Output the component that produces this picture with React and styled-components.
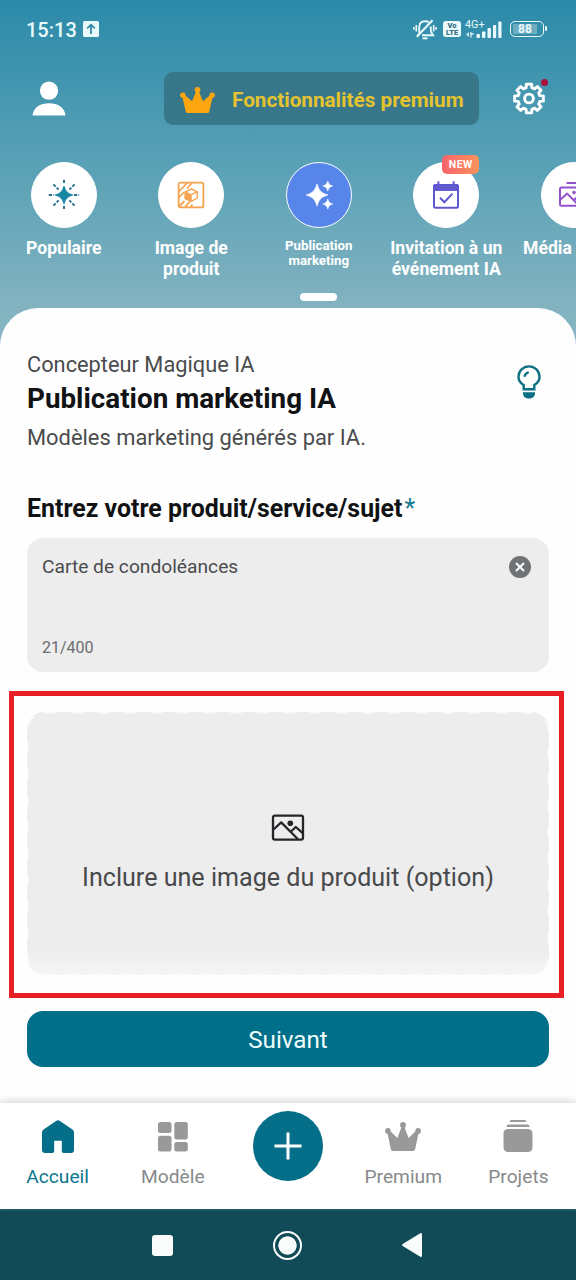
import styled, { createGlobalStyle } from "styled-components";

const categories = [
  { label: ["Populaire"], icon: "spark" },
  { label: ["Image de", "produit"], icon: "product" },
  { label: ["Publication", "marketing"], icon: "stars", active: true },
  { label: ["Invitation à un", "événement IA"], icon: "calendar", isNew: true },
  { label: ["Média"], icon: "media", cut: true },
];

const App = () => {
  return (
    <>
      <GlobalStyle />
      <Screen>
        <StatusBar>
          <Clock>15:13</Clock>
          <UploadIcon />
          <StatusIcons>
            <MutedIcon />
            <VolteIcon />
            <Signal>
              <Network>4G+</Network>
              <SignalIcon />
            </Signal>
            <Battery>
              <BatteryLevel>88</BatteryLevel>
            </Battery>
          </StatusIcons>
        </StatusBar>

        <TopBar>
          <UserIcon />
          <PremiumButton>
            <CrownIcon width={35} height={26} color="#fda610" />
            Fonctionnalités premium
          </PremiumButton>
          <Settings>
            <GearIcon />
            <RedDot />
          </Settings>
        </TopBar>

        <Categories>
          {categories.map((item) => (
            <Category key={item.icon}>
              <Circle $active={item.active}>
                <CategoryIcon name={item.icon} />
                {item.isNew && <NewBadge>NEW</NewBadge>}
              </Circle>
              <CategoryLabel $active={item.active} $cut={item.cut}>
                {item.label.map((line) => (
                  <span key={line}>{line}</span>
                ))}
              </CategoryLabel>
              {item.active && <Indicator />}
            </Category>
          ))}
        </Categories>

        <Sheet>
          <Heading>
            <div>
              <Overline>Concepteur Magique IA</Overline>
              <Title>Publication marketing IA</Title>
              <Description>Modèles marketing générés par IA.</Description>
            </div>
            <BulbIcon />
          </Heading>

          <Question>
            Entrez votre produit/service/sujet<Star>*</Star>
          </Question>
          <InputBox>
            <InputRow>
              Carte de condoléances
              <ClearIcon />
            </InputRow>
            <Counter>21/400</Counter>
          </InputBox>

          <Upload>
            <DashedFrame>
              <rect x="0.75" y="0.75" width="520.5" height="261.5" rx="17" />
            </DashedFrame>
            <PictureIcon />
            <span>Inclure une image du produit (option)</span>
            <Highlight />
          </Upload>

          <NextButton>Suivant</NextButton>
        </Sheet>

        <TabBar>
          <Tab $active>
            <HomeIcon />
            Accueil
          </Tab>
          <Tab>
            <GridIcon />
            Modèle
          </Tab>
          <AddTab>
            <AddButton>
              <svg width="28" height="28" viewBox="0 0 28 28" fill="none" stroke="#fff" strokeWidth="3">
                <path d="M14 0.5V27.5M0.5 14H27.5" />
              </svg>
            </AddButton>
          </AddTab>
          <Tab>
            <TabIcon>
              <CrownIcon width={36} height={29} color="#999" />
            </TabIcon>
            Premium
          </Tab>
          <Tab>
            <StackIcon />
            Projets
          </Tab>
        </TabBar>

        <SystemBar>
          <Recents />
          <HomeKey />
          <svg width="20" height="24" viewBox="0 0 20 24" fill="#fafcfc">
            <path d="M18.3 0.3Q20 -0.5 20 1.5V22.5Q20 24.5 18.3 23.7L0.7 13Q-0.5 12 0.7 11Z" />
          </svg>
        </SystemBar>
      </Screen>
    </>
  );
};

/* icons */

const UploadIcon = () => (
  <svg width="16" height="16" viewBox="0 0 16 16">
    <rect width="16" height="16" rx="1.5" fill="#e9fafc" />
    <path d="M8 13V4M4.2 7.4L8 3.7L11.8 7.4" fill="none" stroke="#3589a3" strokeWidth="1.8" />
  </svg>
);

const MutedIcon = () => (
  <svg width="24" height="21" viewBox="0 0 24 21" fill="none" stroke="#eafafd" strokeWidth="1.9">
    <path d="M6.2 14V8.5Q6.2 2.2 12 2.2Q14.4 2.2 15.8 3.2M17.8 7.5V12.5L20.2 16.2H9M4 16.2H5.5" />
    <path d="M3.8 17.8L19.5 1.2" strokeWidth="2.1" />
    <path d="M9.5 19.3H14.5" strokeWidth="2" />
    <path d="M3.3 6V12.5M0.9 8V10.8M20.7 6V12.5M23.1 8V10.8" strokeWidth="1.6" />
  </svg>
);

const VolteIcon = () => (
  <VolteBox>
    <span>Vo</span>
    <span>LTE</span>
  </VolteBox>
);

const SignalIcon = () => (
  <svg width="36" height="17" viewBox="0 0 36 17" fill="#eafafd">
    <path d="M0 13.5L3 11V16ZM4.2 11H5.6V16.5H4.2ZM5.4 11L8.5 13.3L5.4 14Z" opacity="0.85" />
    <rect x="10.5" y="13" width="3.4" height="4" rx="0.8" />
    <rect x="16" y="10.5" width="3.4" height="6.5" rx="0.8" />
    <rect x="21.5" y="7" width="3.4" height="10" rx="0.8" />
    <rect x="27" y="4" width="3.2" height="13" rx="0.8" />
    <rect x="32.3" y="0.5" width="3.2" height="16.5" rx="0.8" />
  </svg>
);

const UserIcon = () => (
  <svg width="34" height="35" viewBox="0 0 34 35" fill="#fff">
    <circle cx="17" cy="9.7" r="9.1" />
    <path d="M0.5 34.6C1 26.8 8 22.2 17 22.2S33 26.8 33.5 34.6Z" />
  </svg>
);

const CrownIcon = ({ width, height, color }) => (
  <svg width={width} height={height} viewBox="0 0 36 28" preserveAspectRatio="none" fill={color}>
    <circle cx="18" cy="2.9" r="2.9" />
    <circle cx="2.9" cy="8.7" r="2.8" />
    <circle cx="33.1" cy="8.7" r="2.8" />
    <path d="M2.2 9.5L4.6 8.3L12.4 15.4L16.6 4.5H19.4L23.6 15.4L31.4 8.3L33.8 9.5L30.2 26Q29.9 28 28 28H8Q6.1 28 5.8 26Z" />
  </svg>
);

// eight flat teeth, four points per tooth
const gearPoints = Array.from({ length: 8 }, (_, i) =>
  [
    [-15, 11.2],
    [-10.5, 14.6],
    [10.5, 14.6],
    [15, 11.2],
  ].map(([offset, radius]) => {
    const angle = ((i * 45 + offset - 90) * Math.PI) / 180;
    return `${(17 + radius * Math.cos(angle)).toFixed(2)},${(16.5 + radius * Math.sin(angle)).toFixed(2)}`;
  })
)
  .flat()
  .join(" ");

const GearIcon = () => (
  <svg width="34" height="33" viewBox="0 0 34 33" fill="none" stroke="#fff" strokeWidth="2.9" strokeLinejoin="round">
    <polygon points={gearPoints} />
    <circle cx="17" cy="16.5" r="4.4" />
  </svg>
);

const BulbIcon = () => (
  <svg width="24" height="34" viewBox="0 0 24 34">
    <path
      d="M6.7 24.2V20.1C3.6 18.3 1.5 15.6 1.5 11.8A10.5 10.4 0 0 1 22.5 11.8C22.5 15.6 20.4 18.3 17.3 20.1V24.2Z"
      fill="none"
      stroke="#0d7084"
      strokeWidth="2.4"
    />
    <path d="M7.6 10.8Q8.4 8.4 10.8 7.6" fill="none" stroke="#0d7084" strokeWidth="2.4" strokeLinecap="round" />
    <path d="M6 27.2H18V28.4C18 31.5 15.3 33.5 12 33.5S6 31.5 6 28.4Z" fill="#0d7084" />
  </svg>
);

const ClearIcon = () => (
  <svg width="22" height="22" viewBox="0 0 22 22">
    <circle cx="11" cy="11" r="11" fill="#707375" />
    <path d="M7 7L15 15M15 7L7 15" stroke="#fff" strokeWidth="2" />
  </svg>
);

const PictureIcon = () => (
  <svg width="34" height="27" viewBox="0 0 34 27" fill="none" stroke="#242629" strokeWidth="2.3" strokeLinejoin="round">
    <rect x="2" y="1.6" width="30" height="24" rx="1.8" />
    <path d="M2.5 15.5L10.2 8.4L27 25.2M19.5 18L24.8 13L32 19.3" />
    <circle cx="19.3" cy="9.2" r="2.8" fill="#242629" stroke="none" />
  </svg>
);

const HomeIcon = () => (
  <svg width="34" height="34" viewBox="0 0 34 34" fill="#056e88">
    <path d="M15 0.9Q17 -0.5 19 0.9L31.4 9.5Q33 10.6 33 12.5V30Q33 33 30 33H22.5Q20.8 33 20.8 31.3V20.7H13.2V31.3Q13.2 33 11.5 33H4Q1 33 1 30V12.5Q1 10.6 2.6 9.5Z" />
  </svg>
);

const GridIcon = () => (
  <svg width="30" height="34" viewBox="0 0 30 34" fill="#999">
    <rect y="2" width="13.5" height="11" rx="2.5" />
    <rect x="16.3" y="2" width="13.5" height="17.4" rx="2.5" />
    <rect y="15.7" width="13.5" height="15.8" rx="2.5" />
    <rect x="16.3" y="22" width="13.5" height="9.5" rx="2.5" />
  </svg>
);

const StackIcon = () => (
  <svg width="30" height="34" viewBox="0 0 30 34" fill="#999">
    <path d="M8 0H22Q23 0 23.4 2H6.6Q7 0 8 0ZM5 4.6H25Q26 4.6 26.6 7H3.4Q4 4.6 5 4.6Z" />
    <rect x="0.5" y="9" width="29" height="23" rx="4.5" />
  </svg>
);

const CategoryIcon = ({ name }) => {
  if (name === "spark") {
    return (
      <svg width="32" height="32" viewBox="0 0 32 32" stroke="#2a6f88" strokeWidth="1.9" fill="none">
        <path
          d="M16 7.2C17.6 12.4 19.6 14.4 24.8 16C19.6 17.6 17.6 19.6 16 24.8C14.4 19.6 12.4 17.6 7.2 16C12.4 14.4 14.4 12.4 16 7.2Z"
          fill="#1986a3"
          stroke="#1986a3"
          strokeWidth="1"
        />
        <path
          d="M16 0.8V5.2M16 26.8V31.2M0.8 16H6M26 16H31.2M5.4 5.4L10.6 10.6M26.6 26.6L21.4 21.4M26.6 5.4L21.4 10.6M5.4 26.6L10.6 21.4"
          strokeDasharray="3.2 1.4"
        />
      </svg>
    );
  }
  if (name === "product") {
    return (
      <svg width="28" height="28" viewBox="0 0 28 28" fill="none" stroke="#f6a350" strokeWidth="1.8" strokeLinejoin="round">
        <rect x="1.6" y="1.6" width="24.8" height="24.8" rx="2" />
        <path d="M1.5 11L10.5 1.5M1.5 17L7 11M10 7.5L15.5 1.5M2 25.5L7.5 20M8 26L12.5 20.8M13.5 26L15.5 23.5" />
        <path d="M8.2 10.8L14.6 8L20.3 10.8V17L14.2 20.4L8.2 17.5Z" strokeWidth="1.4" />
        <path d="M8.2 10.8L14.2 13.6V20.4L8.2 17.5Z" fill="#f6a350" strokeWidth="1" />
        <path d="M14.2 13.6L20.3 10.8" strokeWidth="1.3" />
      </svg>
    );
  }
  if (name === "stars") {
    return (
      <svg width="28" height="28" viewBox="0 0 28 28" fill="#fff" stroke="#fff" strokeWidth="0.6">
        <path d="M12 2.8C14.2 10 16 11.8 23 14C16 16.2 14.2 18 12 25.2C9.8 18 8 16.2 1 14C8 11.8 9.8 10 12 2.8Z" />
        <path d="M22.8 0C23.8 3.3 24.5 4 27.8 5C24.5 6 23.8 6.7 22.8 10C21.8 6.7 21.1 6 17.8 5C21.1 4 21.8 3.3 22.8 0Z" />
        <path d="M22.8 18C23.8 21.3 24.5 22 27.8 23C24.5 24 23.8 24.7 22.8 28C21.8 24.7 21.1 24 17.8 23C21.1 22 21.8 21.3 22.8 18Z" />
      </svg>
    );
  }
  if (name === "calendar") {
    return (
      <svg width="28" height="28" viewBox="0 0 28 28" fill="none" stroke="#6058cf" strokeWidth="2">
        <rect x="2" y="4" width="24" height="22.8" rx="1.5" />
        <path d="M2 3.8H26V9.4H2Z" fill="#6058cf" strokeWidth="1" />
        <path d="M6.4 0.3V4M21.6 0.3V4M8 16.8L12.4 21.2L20.4 12.6" />
      </svg>
    );
  }
  return (
    <svg width="32" height="28" viewBox="0 0 32 28" fill="none" stroke="#9351cb" strokeWidth="2" strokeLinejoin="round">
      <path d="M8.5 2H31" />
      <rect x="2" y="6.4" width="28" height="18.4" rx="1.5" />
      <path d="M2.5 18.5L9.2 12.6L21 24.5M15.5 19.2L19.5 15.8L28 22" />
      <circle cx="16" cy="11.6" r="1.8" fill="#9351cb" stroke="none" />
    </svg>
  );
};

/* styles */

const GlobalStyle = createGlobalStyle`
  * {
    box-sizing: border-box;
  }

  body {
    margin: 0;
    font-family: Roboto, "Liberation Sans", sans-serif;
  }

  svg {
    display: block;
    flex-shrink: 0;
  }
`;

const Screen = styled.div`
  width: 576px;
  height: 1280px;
  display: flex;
  flex-direction: column;
  overflow: hidden;
  background: linear-gradient(#2b8aa9 0, #559fb5 150px, #83b3c1 310px, #8ab6c3 350px);
`;

const StatusBar = styled.header`
  height: 58px;
  display: flex;
  align-items: center;
  gap: 6px;
  padding: 0 29px 0 26px;
  color: #e9fafc;
`;

const Clock = styled.div`
  font-size: 20px;
  font-weight: 500;
  line-height: 24px;
  padding-top: 1px;
`;

const StatusIcons = styled.div`
  display: flex;
  align-items: center;
  margin-left: auto;
`;

const VolteBox = styled.div`
  width: 18px;
  height: 16px;
  margin: 0 5px 0 6px;
  padding-top: 1px;
  border-radius: 3px;
  background: #eafafd;
  color: #35707f;
  display: flex;
  flex-direction: column;
  align-items: center;
  font-size: 7.5px;
  font-weight: 900;
  line-height: 7px;
`;

const Signal = styled.div`
  position: relative;
  width: 36px;
  height: 17px;
`;

const Network = styled.div`
  position: absolute;
  top: -2px;
  left: -1px;
  font-size: 10.8px;
  line-height: 11px;
`;

const Battery = styled.div`
  position: relative;
  width: 34px;
  height: 16px;
  margin: 0 3px 0 8px;
  padding: 2px;
  border: 1.5px solid #eafafd;
  border-radius: 5px;

  &::after {
    content: "";
    position: absolute;
    top: 4px;
    right: -4px;
    width: 2px;
    height: 5px;
    border-radius: 1px;
    background: #eafafd;
  }
`;

const BatteryLevel = styled.div`
  width: 24px;
  height: 10px;
  background: #6eadc1;
  font-size: 12px;
  font-weight: 700;
  line-height: 11px;
  text-align: center;
`;

const TopBar = styled.div`
  display: flex;
  align-items: center;
  margin-top: 14px;
  padding: 0 30px 0 32px;
`;

const PremiumButton = styled.button`
  width: 315px;
  height: 53px;
  margin: 0 33px 0 98px;
  padding: 2px 0 0 16px;
  display: flex;
  align-items: center;
  gap: 17px;
  border: none;
  border-radius: 9px;
  background: #387789;
  color: #e4c32f;
  font-family: inherit;
  font-size: 20.7px;
  font-weight: 700;
  white-space: nowrap;
`;

const Settings = styled.div`
  position: relative;
`;

const RedDot = styled.div`
  position: absolute;
  top: -3px;
  right: -2px;
  width: 7px;
  height: 7px;
  border-radius: 50%;
  background: #a9123f;
`;

const Categories = styled.div`
  height: 183px;
  display: flex;
  padding-top: 36.5px;
`;

const Category = styled.div`
  position: relative;
  flex: 0 0 127.5px;
  display: flex;
  flex-direction: column;
  align-items: center;
`;

const Circle = styled.div`
  position: relative;
  width: 66px;
  height: 66px;
  display: flex;
  justify-content: center;
  align-items: center;
  border: 1.5px solid #fff;
  border-radius: 50%;
  background: ${({ $active }) => ($active ? "#5785ea" : "#fff")};
`;

const NewBadge = styled.div`
  position: absolute;
  top: -8px;
  right: -1px;
  width: 37px;
  height: 19px;
  border-radius: 5px;
  background: linear-gradient(90deg, #f9646b, #fb935c);
  color: #fff;
  font-size: 10.5px;
  font-weight: 700;
  line-height: 19px;
  letter-spacing: 0.5px;
  text-align: center;
`;

const CategoryLabel = styled.div`
  width: 100%;
  margin-top: 10px;
  padding-left: ${({ $cut }) => ($cut ? "13px" : "0")};
  display: flex;
  flex-direction: column;
  color: #fff;
  font-size: ${({ $active }) => ($active ? "13.3px" : "17.6px")};
  font-weight: 700;
  line-height: ${({ $active }) => ($active ? "15.5px" : "21px")};
  text-align: ${({ $cut }) => ($cut ? "left" : "center")};
  white-space: nowrap;
`;

const Indicator = styled.div`
  width: 37px;
  height: 8px;
  margin-top: 24.5px;
  border-radius: 4px;
  background: #fff;
`;

const Sheet = styled.main`
  height: 795px;
  padding: 42px 27px 0;
  border-radius: 38px 38px 0 0;
  background: #fefefe;
`;

const Heading = styled.div`
  display: flex;
  justify-content: space-between;

  & > svg {
    margin: 15px 8px 0 0;
  }
`;

const Overline = styled.div`
  color: #4a4b4d;
  font-size: 21.8px;
  line-height: 30px;
`;

const Title = styled.h1`
  margin: 1px 0 6px;
  color: #111214;
  font-size: 27.8px;
  font-weight: 700;
  line-height: 36px;
`;

const Description = styled.div`
  color: #4a4b4d;
  font-size: 21.9px;
  line-height: 30px;
`;

const Question = styled.h2`
  margin: 41px 0 14px;
  color: #111214;
  font-size: 24.9px;
  font-weight: 700;
  line-height: 30px;
`;

const Star = styled.span`
  margin-left: 2px;
  color: #14788f;
  font-weight: 400;
`;

const InputBox = styled.div`
  height: 134px;
  padding: 16px 18px 13px 15px;
  display: flex;
  flex-direction: column;
  justify-content: space-between;
  border-radius: 16px;
  background: #ededed;
`;

const InputRow = styled.div`
  display: flex;
  justify-content: space-between;
  align-items: center;
  color: #4a4b4d;
  font-size: 19.2px;
  line-height: 26px;
`;

const Counter = styled.div`
  color: #6b6c6e;
  font-size: 16px;
  line-height: 22px;
`;

const Upload = styled.div`
  position: relative;
  height: 263px;
  margin-top: 40px;
  padding-top: 102px;
  display: flex;
  flex-direction: column;
  align-items: center;
  gap: 20px;
  border-radius: 17px;
  background: linear-gradient(#ededed 0, #ededed 90%, #f5f5f5);
  color: #48494b;
  font-size: 25.1px;
  line-height: 34px;
`;

const DashedFrame = styled.svg`
  position: absolute;
  top: 0;
  left: 0;
  width: 522px;
  height: 263px;
  fill: none;
  stroke: #fafafa;
  stroke-width: 1.5px;
  stroke-dasharray: 11.5 15;
`;

/* red callout around the upload area */
const Highlight = styled.div`
  position: absolute;
  top: -21px;
  left: -18px;
  width: 555px;
  height: 307px;
  border: 5px solid #e81e25;
`;

const NextButton = styled.button`
  width: 100%;
  height: 56px;
  margin-top: 36px;
  padding: 2px 0 0;
  border: none;
  border-radius: 16px;
  background: #006f89;
  color: #f1fcfd;
  font-family: inherit;
  font-size: 24.2px;
`;

const TabBar = styled.nav`
  position: relative;
  height: 106px;
  display: flex;
  background: #fff;
  box-shadow: 0 -2px 7px rgba(0, 0, 0, 0.16);
`;

const Tab = styled.div`
  flex: 1;
  display: flex;
  flex-direction: column;
  align-items: center;
  gap: 10px;
  padding-top: 17px;
  color: ${({ $active }) => ($active ? "#0b7790" : "#87898a")};
  font-size: 19.2px;
  line-height: 26px;
`;

const TabIcon = styled.div`
  height: 34px;
  padding-top: 2px;
`;

const AddTab = styled.div`
  flex: 1;
  display: flex;
  justify-content: center;
  padding-top: 8px;
`;

const AddButton = styled.div`
  width: 70px;
  height: 70px;
  display: flex;
  justify-content: center;
  align-items: center;
  border-radius: 50%;
  background: #056e88;
`;

const SystemBar = styled.footer`
  height: 71px;
  display: flex;
  justify-content: center;
  align-items: center;
  gap: 100px;
  padding: 0 2px 1px 0;
  border-top: 2px solid #1f5f6d;
  background: #104b57;
`;

const Recents = styled.div`
  width: 21px;
  height: 21px;
  border-radius: 3px;
  background: #fafcfc;
`;

const HomeKey = styled.div`
  width: 29px;
  height: 29px;
  border: 2.5px solid #fafcfc;
  border-radius: 50%;
  background: radial-gradient(circle, #fafcfc 8.8px, #104b57 9.5px);
`;

export default App;
